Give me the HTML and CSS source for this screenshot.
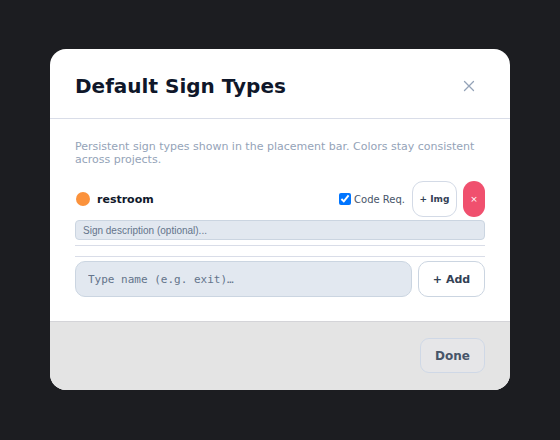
FILE: index.html
```html
<!DOCTYPE html>
<html>
<head>
<meta charset="utf-8">
<link rel="stylesheet" href="styles.css">
</head>
<body>
<div class="backdrop">
  <div class="modal">
    <div class="header">
      <h2 class="title">Default Sign Types</h2>
      <button class="close" aria-label="Close">
        <svg width="12" height="12" viewBox="0 0 12 12"><path d="M1.5 1.5L10.5 10.5M10.5 1.5L1.5 10.5" stroke="#94a3b8" stroke-width="1.3" stroke-linecap="round"/></svg>
      </button>
    </div>
    <div class="body">
      <p class="desc">Persistent sign types shown in the placement bar. Colors stay consistent across projects.</p>
      <div class="list">
        <div class="item">
          <div class="item-row">
            <span class="dot"></span>
            <span class="name">restroom</span>
            <label class="code"><input type="checkbox" checked><span>Code Req.</span></label>
            <button class="img-btn">+ Img</button>
            <button class="del-btn">×</button>
          </div>
          <input class="sign-desc" type="text" placeholder="Sign description (optional)...">
        </div>
      </div>
      <div class="add-row">
        <input class="add-input" type="text" placeholder="Type name (e.g. exit)…">
        <button class="add-btn">+ Add</button>
      </div>
    </div>
    <div class="footer">
      <button class="done">Done</button>
    </div>
  </div>
</div>
</body>
</html>
```

FILE: styles.css
```css
* { box-sizing: border-box; }
html, body { margin: 0; padding: 0; }
body {
  background: #1c1d21;
  font-family: "DejaVu Sans", sans-serif;
  width: 560px;
  height: 440px;
  overflow: hidden;
}
.backdrop {
  height: 440px;
  display: flex;
  align-items: flex-start;
  justify-content: center;
  padding-top: 49px;
}
.modal {
  width: 460px;
  background: #ffffff;
  border-radius: 16px;
  overflow: hidden;
}
.header {
  display: flex;
  align-items: center;
  justify-content: space-between;
  padding: 25px 24px 20px 25px;
  border-bottom: 1px solid #d9dde8;
}
.title {
  margin: 0;
  font-size: 20px;
  line-height: 24px;
  font-weight: bold;
  color: #0f172a;
}
.close {
  border: 0;
  background: none;
  padding: 0;
  margin-right: 11px;
  width: 12px;
  height: 12px;
  display: flex;
}
.body {
  padding: 21px 25px 24px 25px;
}
.desc {
  margin: 0;
  font-size: 11px;
  line-height: 13px;
  color: #94a3b8;
}
.list {
  margin-top: 15px;
  padding-bottom: 10px;
  border-bottom: 1px solid #d9dde8;
}
.item {
  padding-bottom: 5px;
  border-bottom: 1px solid #d9dde8;
}
.item-row {
  display: flex;
  align-items: center;
  height: 36px;
}
.dot {
  width: 14px;
  height: 14px;
  border-radius: 50%;
  background: #fb923c;
  margin-left: 1px;
}
.name {
  margin-left: 7px;
  font-size: 11px;
  font-weight: bold;
  color: #0f172a;
  flex: 1;
}
.code {
  display: flex;
  align-items: center;
  font-size: 10px;
  color: #475569;
  margin-right: 7px;
}
.code input {
  margin: 0 3px 0 0;
  width: 12px;
  height: 12px;
}
.img-btn {
  width: 45px;
  height: 36px;
  border: 1px solid #d3dae6;
  background: #ffffff;
  border-radius: 11px;
  font-family: "DejaVu Sans", sans-serif;
  font-size: 9px;
  font-weight: bold;
  color: #334155;
  padding: 0;
}
.del-btn {
  width: 22px;
  height: 36px;
  margin-left: 6px;
  border: 0;
  border-radius: 11px;
  background: #f0506e;
  color: #ffffff;
  font-family: "DejaVu Sans", sans-serif;
  font-size: 9px;
  padding: 0;
}
.sign-desc {
  display: block;
  width: 100%;
  height: 20px;
  margin-top: 3px;
  border: 1px solid #cbd5e1;
  background: #e2e8f0;
  border-radius: 4px;
  padding: 0 7px;
  font-family: "Liberation Sans", sans-serif;
  font-size: 10px;
  color: #334155;
}
.sign-desc::placeholder { color: #64748b; }
.add-row {
  display: flex;
  gap: 6px;
  margin-top: 4px;
}
.add-input {
  flex: 1;
  height: 36px;
  border: 1px solid #cbd5e1;
  background: #e2e8f0;
  border-radius: 10px;
  padding: 0 12px;
  font-family: "DejaVu Sans Mono", monospace;
  font-size: 11px;
  color: #334155;
}
.add-input::placeholder { color: #64748b; }
.add-btn {
  width: 67px;
  height: 36px;
  border: 1px solid #cbd5e1;
  background: #ffffff;
  border-radius: 10px;
  font-family: "DejaVu Sans", sans-serif;
  font-size: 11px;
  font-weight: bold;
  color: #334155;
  padding: 0;
}
.footer {
  background: #e4e4e4;
  border-top: 1px solid #d4d4d8;
  padding: 16px 25px 17px 25px;
  display: flex;
  justify-content: flex-end;
}
.done {
  width: 65px;
  height: 35px;
  border: 1px solid #cfd8e6;
  background: #e6e6e8;
  border-radius: 9px;
  font-family: "DejaVu Sans", sans-serif;
  font-size: 12px;
  font-weight: bold;
  color: #475569;
  padding: 0;
}
```
